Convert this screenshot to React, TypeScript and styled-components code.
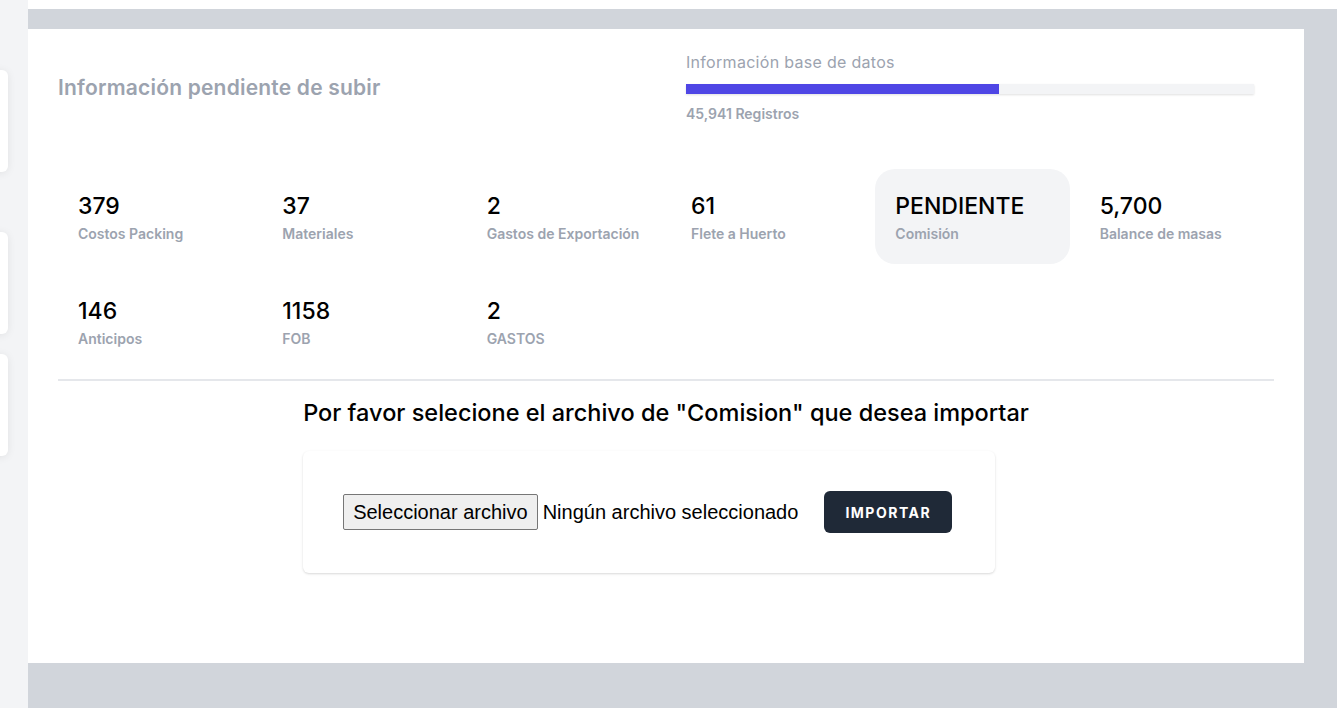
import styled, { createGlobalStyle } from "styled-components";

const GlobalStyle = createGlobalStyle`
  html, body {
    margin: 0;
    padding: 0;
    height: 100%;
  }
  body {
    font-family: "Inter", "Noto Sans", sans-serif;
    color: #000;
    overflow: hidden;
  }
  #root {
    height: 100%;
  }
`;

type Stat = { value: string; label: string; active?: boolean };

const stats: Stat[] = [
  { value: "379", label: "Costos Packing" },
  { value: "37", label: "Materiales" },
  { value: "2", label: "Gastos de Exportación" },
  { value: "61", label: "Flete a Huerto" },
  { value: "PENDIENTE", label: "Comisión", active: true },
  { value: "5,700", label: "Balance de masas" },
  { value: "146", label: "Anticipos" },
  { value: "1158", label: "FOB" },
  { value: "2", label: "GASTOS" },
];

const App = () => {
  const total = 45941;
  const progress = 55.1;

  return (
    <>
      <GlobalStyle />
      <LayoutStyled>
        <SidebarStyled>
          <SideCardStyled $height={102} $top={70} />
          <SideCardStyled $height={102} $top={60} />
          <SideCardStyled $height={102} $top={20} />
        </SidebarStyled>
        <MainStyled>
          <TopStripStyled />
          <WorkAreaStyled>
            <PanelStyled>
              <HeaderStyled>
                <TitleStyled>Información pendiente de subir</TitleStyled>
                <DbInfoStyled>
                  <DbLabelStyled>Información base de datos</DbLabelStyled>
                  <BarTrackStyled>
                    <BarFillStyled style={{ width: `${progress}%` }} />
                  </BarTrackStyled>
                  <DbCountStyled>{total.toLocaleString("en-US")} Registros</DbCountStyled>
                </DbInfoStyled>
              </HeaderStyled>

              <StatsGridStyled>
                {stats.map((s) => (
                  <StatCellStyled key={s.label} $active={s.active}>
                    <StatValueStyled>{s.value}</StatValueStyled>
                    <StatLabelStyled>{s.label}</StatLabelStyled>
                  </StatCellStyled>
                ))}
              </StatsGridStyled>

              <DividerStyled />

              <ImportAreaStyled>
                <ImportBlockStyled>
                  <ImportTitleStyled>Por favor selecione el archivo de "Comision" que desea importar</ImportTitleStyled>
                  <UploadCardStyled>
                    <FilePickerStyled>
                      <FileButtonStyled type="button">Seleccionar archivo</FileButtonStyled>
                      <FileNameStyled>Ningún archivo seleccionado</FileNameStyled>
                    </FilePickerStyled>
                    <ImportButtonStyled type="button">IMPORTAR</ImportButtonStyled>
                  </UploadCardStyled>
                </ImportBlockStyled>
              </ImportAreaStyled>
            </PanelStyled>
          </WorkAreaStyled>
        </MainStyled>
      </LayoutStyled>
    </>
  );
};

export default App;

const LayoutStyled = styled.div`
  display: flex;
  height: 708px;
  width: 100%;
`;

const SidebarStyled = styled.aside`
  width: 28px;
  flex-shrink: 0;
  background: #f3f4f6;
  overflow: hidden;
  display: flex;
  flex-direction: column;
`;

const SideCardStyled = styled.div<{ $height: number; $top: number }>`
  width: 220px;
  height: ${({ $height }) => $height}px;
  margin-top: ${({ $top }) => $top}px;
  margin-left: -212px;
  flex-shrink: 0;
  background: #fff;
  border-radius: 6px;
  box-shadow: 0 1px 8px rgba(0, 0, 0, 0.08);
`;

const MainStyled = styled.main`
  flex: 1;
  display: flex;
  flex-direction: column;
  min-width: 0;
`;

const TopStripStyled = styled.div`
  height: 9px;
  background: #fff;
  flex-shrink: 0;
`;

const WorkAreaStyled = styled.div`
  flex: 1;
  background: #d1d5db;
  padding: 20px 33px 0 0;
`;

const PanelStyled = styled.section`
  background: #fff;
  height: 634px;
  box-sizing: border-box;
  padding: 22px 30px 0 30px;
  display: flex;
  flex-direction: column;
`;

const HeaderStyled = styled.div`
  display: grid;
  grid-template-columns: 1fr 1fr;
  align-items: center;
`;

const TitleStyled = styled.h2`
  margin: 0;
  font-size: 21px;
  font-weight: 600;
  color: #9ca3af;
  letter-spacing: 0.2px;
`;

const DbInfoStyled = styled.div`
  padding: 0 20px;
  display: flex;
  flex-direction: column;
`;

const DbLabelStyled = styled.div`
  font-size: 16px;
  line-height: 22px;
  color: #9ca3af;
  letter-spacing: 0.3px;
`;

const BarTrackStyled = styled.div`
  margin-top: 11px;
  height: 10px;
  background: #f3f4f6;
  box-shadow: 0 1px 2px rgba(0, 0, 0, 0.12);
  overflow: hidden;
`;

const BarFillStyled = styled.div`
  height: 100%;
  background: #4f46e5;
`;

const DbCountStyled = styled.div`
  margin-top: 10px;
  font-size: 14px;
  line-height: 20px;
  font-weight: 600;
  color: #9ca3af;
`;

const StatsGridStyled = styled.div`
  margin-top: 45px;
  display: grid;
  grid-template-columns: repeat(6, 1fr);
  gap: 10px;
`;

const StatCellStyled = styled.div<{ $active?: boolean }>`
  padding: 21px 20px 19px;
  border-radius: 20px;
  background: ${({ $active }) => ($active ? "#f3f4f6" : "transparent")};
  display: flex;
  flex-direction: column;
`;

const StatValueStyled = styled.div`
  font-size: 23px;
  line-height: 32px;
  font-weight: 500;
  color: #000;
`;

const StatLabelStyled = styled.div`
  font-size: 14px;
  line-height: 23px;
  font-weight: 600;
  color: #9ca3af;
`;

const DividerStyled = styled.hr`
  margin: 10px 0 0 0;
  border: none;
  height: 2px;
  background: #e5e7eb;
`;

const ImportAreaStyled = styled.div`
  display: flex;
  justify-content: center;
  padding-top: 17px;
`;

const ImportBlockStyled = styled.div`
  display: flex;
  flex-direction: column;
  align-items: flex-start;
`;

const ImportTitleStyled = styled.h3`
  margin: 0;
  font-size: 23.5px;
  line-height: 30px;
  font-weight: 500;
  color: #000;
`;

const UploadCardStyled = styled.div`
  margin-top: 23px;
  width: 692px;
  box-sizing: border-box;
  padding: 40px;
  background: #fff;
  border-radius: 6px;
  box-shadow: 0 1px 3px rgba(0, 0, 0, 0.1), 0 1px 2px rgba(0, 0, 0, 0.06);
  display: flex;
  align-items: center;
  gap: 26px;
`;

const FilePickerStyled = styled.div`
  display: flex;
  align-items: center;
  gap: 5px;
  font-family: "Liberation Sans", Arial, sans-serif;
  font-size: 20px;
`;

const FileButtonStyled = styled.button`
  font-family: inherit;
  font-size: 20px;
  height: 36px;
  padding: 0 9px;
  background: #efefef;
  border: 1px solid #767676;
  border-radius: 2px;
  color: #000;
`;

const FileNameStyled = styled.span`
  color: #000;
`;

const ImportButtonStyled = styled.button`
  height: 42px;
  padding: 0 21px;
  background: #1f2937;
  color: #fff;
  border: none;
  border-radius: 6px;
  font-family: "Inter", sans-serif;
  font-size: 14px;
  font-weight: 700;
  letter-spacing: 1.5px;
`;
